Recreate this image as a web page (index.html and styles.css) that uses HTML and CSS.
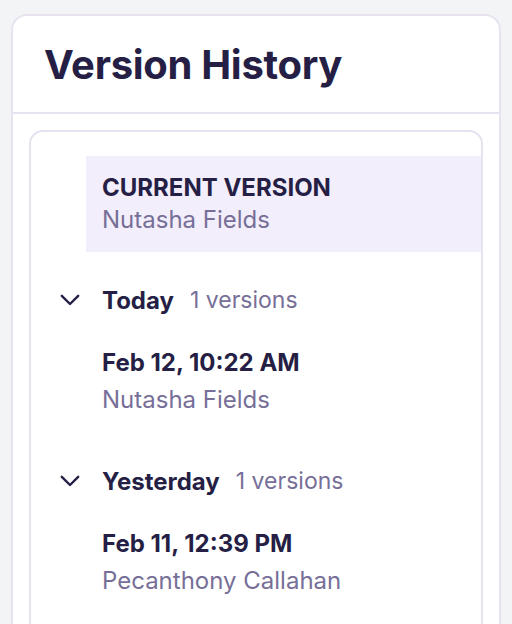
FILE: index.html
```html
<!DOCTYPE html>
<html lang="en">
<head>
<meta charset="utf-8">
<link rel="stylesheet" href="styles.css">
</head>
<body>
<section class="panel">
  <header class="panel-header">
    <h1 class="title">Version History</h1>
  </header>
  <div class="panel-body">
    <div class="list-card">
      <div class="current">
        <div class="current-label">CURRENT VERSION</div>
        <div class="author">Nutasha Fields</div>
      </div>
      <div class="group">
        <div class="group-head">
          <svg class="chev" width="20" height="12" viewBox="0 0 20 12"><polyline points="1.8,1.8 10,10 18.2,1.8" fill="none" stroke="#261f45" stroke-width="2.4" stroke-linecap="round" stroke-linejoin="round"/></svg>
          <span class="group-name">Today</span>
          <span class="group-count">1 versions</span>
        </div>
        <div class="entry">
          <div class="entry-date">Feb 12, 10:22 AM</div>
          <div class="author">Nutasha Fields</div>
        </div>
      </div>
      <div class="group">
        <div class="group-head">
          <svg class="chev" width="20" height="12" viewBox="0 0 20 12"><polyline points="1.8,1.8 10,10 18.2,1.8" fill="none" stroke="#261f45" stroke-width="2.4" stroke-linecap="round" stroke-linejoin="round"/></svg>
          <span class="group-name">Yesterday</span>
          <span class="group-count">1 versions</span>
        </div>
        <div class="entry">
          <div class="entry-date">Feb 11, 12:39 PM</div>
          <div class="author">Pecanthony Callahan</div>
        </div>
      </div>
    </div>
  </div>
</section>
</body>
</html>
```
FILE: styles.css
```css
html, body {
  margin: 0;
  padding: 0;
  background: #f3f4f6;
  height: 100%;
  overflow: hidden;
}
body {
  padding: 14px 11px 0 11px;
  font-family: Inter, "Noto Sans", sans-serif;
  color: #261f45;
}
.panel {
  background: #ffffff;
  border: 2px solid #e6e2f0;
  border-radius: 16px;
  height: 700px;
}
.panel-header {
  height: 96px;
  border-bottom: 2px solid #e6e2f0;
  padding: 0 32px;
  display: flex;
  align-items: center;
}
.title {
  margin: 0;
  font-size: 40px;
  font-weight: 700;
  letter-spacing: -0.3px;
  color: #261f45;
  line-height: 48px;
  margin-left: -1px;
  margin-top: 2px;
}
.panel-body {
  padding: 16px 16px 0 16px;
}
.list-card {
  border: 2px solid #e6e2f0;
  border-radius: 14px;
  padding-top: 24px;
  height: 600px;
}
.current {
  margin-left: 55px;
  background: #f3eefb;
  padding: 16px 16px;
}
.current-label {
  font-size: 24px;
  font-weight: 700;
  line-height: 32px;
}
.current .author {
  line-height: 32px;
}
.author {
  font-size: 24px;
  color: #776f98;
  line-height: 28px;
}
.group {
  padding: 34px 0 53px 29px;
}
.group + .group {
  padding-top: 0;
}
.group-head {
  display: flex;
  align-items: center;
  height: 28px;
}
.chev {
  margin-right: 22px;
}
.group-name {
  font-size: 24px;
  font-weight: 700;
  margin-right: 16px;
}
.group-count {
  font-size: 23px;
  color: #776f98;
}
.entry {
  padding: 35px 0 0 42px;
}
.entry-date {
  font-size: 24px;
  font-weight: 700;
  line-height: 28px;
  margin-bottom: 9px;
}
```
